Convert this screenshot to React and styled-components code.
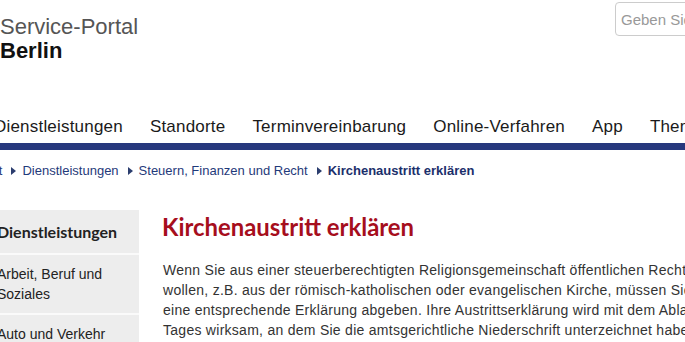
import React from "react";
import styled, { createGlobalStyle } from "styled-components";

const GlobalStyle = createGlobalStyle`
  html, body {
    margin: 0;
    padding: 0;
    background: #fff;
    overflow: hidden;
  }
  body {
    font-family: "Liberation Sans", Arial, sans-serif;
    color: #222;
  }
`;

const Page = styled.div`
  width: 1100px;
  margin-left: -12px;
`;

const Header = styled.header`
  display: grid;
  grid-template-columns: 627px 260px;
  align-items: start;
`;

const Logo = styled.div`
  padding: 15px 0 0 12px;
  font-size: 22px;
  line-height: 24px;
`;

const LogoLight = styled.div`
  color: #555;
`;

const LogoBold = styled.div`
  color: #111;
  font-weight: 700;
`;

const Search = styled.input`
  margin-top: 2px;
  box-sizing: border-box;
  width: 240px;
  height: 34px;
  border: 1px solid #ccc;
  border-radius: 4px;
  padding: 0 5px;
  font-family: "Liberation Sans", Arial, sans-serif;
  font-size: 15px;
  color: #333;
  &::placeholder {
    color: #999;
  }
`;

const Nav = styled.nav`
  margin-top: 54px;
  display: flex;
  gap: 27px;
  padding: 0 0 6px 6px;
  border-bottom: 7px solid #27387d;
  font-size: 17px;
  line-height: 20px;
  letter-spacing: 0.2px;
  white-space: nowrap;
`;

const NavItem = styled.a`
  color: #1a1a1a;
  text-decoration: none;
`;

const Crumbs = styled.div`
  margin: 12px 0 0 -13px;
  display: flex;
  align-items: center;
  font-size: 13px;
  line-height: 18px;
  white-space: nowrap;
`;

const Crumb = styled.a`
  color: ${({ current }) => (current ? "#1b2f6b" : "#1f3a7a")};
  font-weight: ${({ current }) => (current ? 700 : 400)};
  text-decoration: none;
`;

const Arrow = styled.span`
  display: inline-block;
  width: 0;
  height: 0;
  margin: 0 6px 0 9px;
  border-top: 4px solid transparent;
  border-bottom: 4px solid transparent;
  border-left: 5px solid #2b3d6e;
`;

const Body = styled.div`
  margin-top: 30px;
  display: grid;
  grid-template-columns: 151px 1fr;
  column-gap: 24px;
`;

const Sidebar = styled.ul`
  list-style: none;
  margin: 0;
  padding: 0;
  background: #ededed;
`;

const SideItem = styled.li`
  padding: ${({ head }) => (head ? "11px 9px 10px 9px" : "9px 9px 9px 9px")};
  border-bottom: 2px solid #fafafa;
  font-family: ${({ head }) =>
    head ? '"Lato", "Open Sans", sans-serif' : '"Liberation Sans", Arial, sans-serif'};
  font-weight: ${({ head }) => (head ? 700 : 400)};
  font-size: ${({ head }) => (head ? "16px" : "14px")};
  line-height: ${({ head }) => (head ? "22px" : "20px")};
  color: #222;
`;

const Main = styled.main`
  padding-top: 2px;
`;

const Title = styled.h1`
  margin: 0 0 18px -1px;
  font-family: "Lato", "Open Sans", sans-serif;
  font-weight: 700;
  font-size: 23.9px;
  line-height: 30px;
  color: #a60e1d;
`;

const Text = styled.p`
  margin: 0;
  font-size: 14px;
  line-height: 20px;
  letter-spacing: 0.27px;
  color: #333;
  white-space: nowrap;
`;

export default function App() {
  return (
    <>
      <GlobalStyle />
      <Page>
        <Header>
          <Logo>
            <LogoLight>Service-Portal</LogoLight>
            <LogoBold>Berlin</LogoBold>
          </Logo>
          <Search placeholder="Geben Sie einen Suchbegriff ein" />
        </Header>

        <Nav>
          <NavItem>Dienstleistungen</NavItem>
          <NavItem>Standorte</NavItem>
          <NavItem>Terminvereinbarung</NavItem>
          <NavItem>Online-Verfahren</NavItem>
          <NavItem>App</NavItem>
          <NavItem>Themen</NavItem>
        </Nav>

        <Crumbs>
          <Crumb>Start</Crumb>
          <Arrow />
          <Crumb>Dienstleistungen</Crumb>
          <Arrow />
          <Crumb>Steuern, Finanzen und Recht</Crumb>
          <Arrow />
          <Crumb current>Kirchenaustritt erklären</Crumb>
        </Crumbs>

        <Body>
          <Sidebar>
            <SideItem head>Dienstleistungen</SideItem>
            <SideItem>
              Arbeit, Beruf und
              <br />
              Soziales
            </SideItem>
            <SideItem>Auto und Verkehr</SideItem>
          </Sidebar>
          <Main>
            <Title>Kirchenaustritt erklären</Title>
            <Text>
              Wenn Sie aus einer steuerberechtigten Religionsgemeinschaft öffentlichen Rechts austreten
              <br />
              wollen, z.B. aus der römisch-katholischen oder evangelischen Kirche, müssen Sie beim Amtsgericht
              <br />
              eine entsprechende Erklärung abgeben. Ihre Austrittserklärung wird mit dem Ablauf des
              <br />
              Tages wirksam, an dem Sie die amtsgerichtliche Niederschrift unterzeichnet haben oder die
              <br />
              notariell beglaubigte Erklärung beim Amtsgericht eingegangen ist. Die Befreiung
            </Text>
          </Main>
        </Body>
      </Page>
    </>
  );
}
